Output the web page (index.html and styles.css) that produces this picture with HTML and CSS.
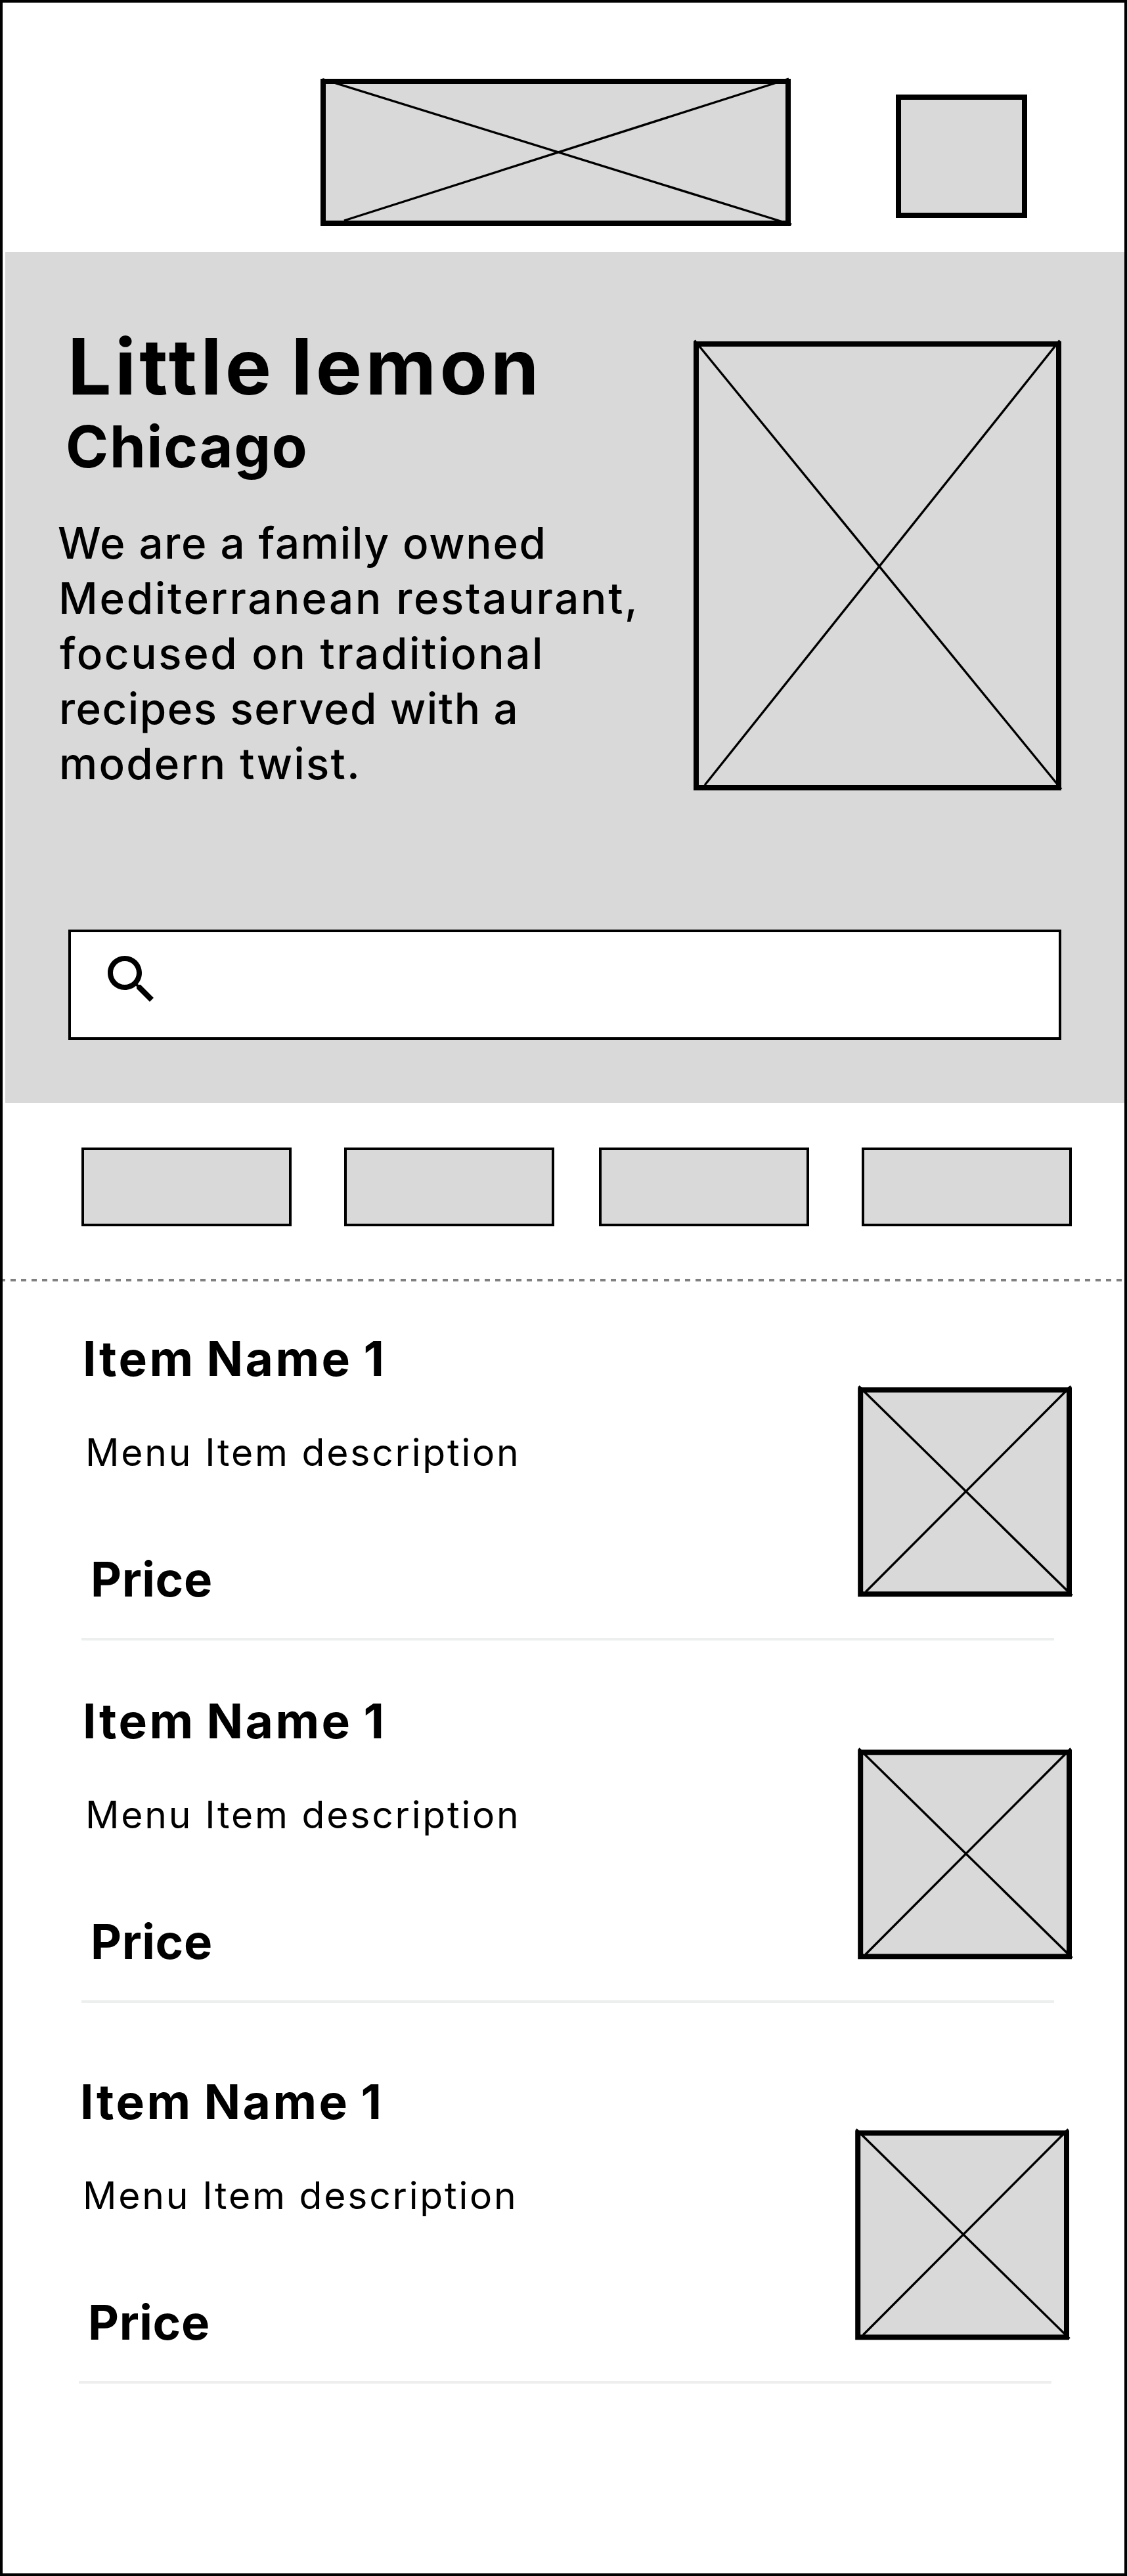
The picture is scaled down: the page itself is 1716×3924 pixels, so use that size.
FILE: index.html
```html
<!DOCTYPE html>
<html lang="en">
<head>
<meta charset="utf-8">
<title>Little lemon</title>
<link rel="stylesheet" href="styles.css">
</head>
<body>
<div class="screen">
  <header class="header">
    <svg class="logo" viewBox="0 0 716 224">
      <rect class="box" x="4" y="4" width="708" height="216"/>
      <path class="cross" d="M3 0.5L717 222M36 216L713 0"/>
    </svg>
    <div class="avatar"></div>
  </header>

  <section class="hero">
    <div class="hero-main">
      <div class="hero-text">
        <h1 class="title">Little lemon</h1>
        <h2 class="city">Chicago</h2>
        <p class="about">
          <span class="line line-1">We are a family owned</span>
          <span class="line line-2">Mediterranean restaurant,</span>
          <span class="line line-3">focused on traditional</span>
          <span class="line line-4">recipes served with a</span>
          <span class="line line-5">modern twist.</span>
        </p>
      </div>
      <svg class="hero-image" viewBox="0 0 560 684">
        <rect class="box" x="4" y="4" width="552" height="676"/>
        <path class="cross" d="M1.5 -1.5L560 682M17 676L557.5 -1.5"/>
      </svg>
    </div>
    <div class="search">
      <svg class="search-icon" viewBox="0 0 24 24"><path d="M15.5 14h-.79l-.28-.27C15.41 12.59 16 11.11 16 9.5 16 5.91 13.09 3 9.5 3S3 5.91 3 9.5 5.91 16 9.5 16c1.61 0 3.09-.59 4.23-1.57l.27.28v.79l5 4.99L20.49 19l-4.99-5zm-6 0C7.01 14 5 11.99 5 9.5S7.01 5 9.5 5 14 7.01 14 9.5 11.99 14 9.5 14z"/></svg>
    </div>
  </section>

  <nav class="filters">
    <div class="chip"></div>
    <div class="chip"></div>
    <div class="chip"></div>
    <div class="chip"></div>
  </nav>
  <div class="dashes"></div>

  <main class="menu">
    <article class="item">
      <div class="item-text">
        <h3 class="name">Item Name 1</h3>
        <p class="description">Menu Item description</p>
        <p class="price">Price</p>
      </div>
      <svg class="item-image" viewBox="0 0 326 320">
        <rect class="box" x="4.2" y="4.3" width="317.8" height="311"/>
        <path class="cross" d="M1.5 -1.5L326.5 317.5M12 312L324.5 -1.5"/>
      </svg>
    </article>
    <article class="item">
      <div class="item-text">
        <h3 class="name">Item Name 1</h3>
        <p class="description">Menu Item description</p>
        <p class="price">Price</p>
      </div>
      <svg class="item-image" viewBox="0 0 326 320">
        <rect class="box" x="4.2" y="4.3" width="317.8" height="311"/>
        <path class="cross" d="M1.5 -1.5L326.5 317.5M12 312L324.5 -1.5"/>
      </svg>
    </article>
    <article class="item item-last">
      <div class="item-text">
        <h3 class="name">Item Name 1</h3>
        <p class="description">Menu Item description</p>
        <p class="price">Price</p>
      </div>
      <svg class="item-image" viewBox="0 0 326 320">
        <rect class="box" x="4.2" y="4.3" width="317.8" height="311"/>
        <path class="cross" d="M1.5 -1.5L326.5 317.5M12 312L324.5 -1.5"/>
      </svg>
    </article>
  </main>
</div>
</body>
</html>
```
FILE: styles.css
```css
* { box-sizing: border-box; }

body {
  margin: 0;
  background: #fff;
  color: #000;
  font-family: Inter, "Liberation Sans", sans-serif;
}

h1, h2, h3, p { margin: 0; white-space: nowrap; }
svg { display: block; flex: none; overflow: visible; }

.screen {
  width: 1716px;
  height: 3924px;
  border: 4px solid #000;
  overflow: hidden;
}

/* Placeholder boxes */
.box { fill: #d9d9d9; stroke: #000; stroke-width: 8; }
.cross { fill: none; stroke: #000; stroke-width: 3.4; }

.header {
  display: flex;
  gap: 160px;
  height: 380px;
  padding: 116px 0 0 484px;
}
.logo { width: 716px; height: 224px; }
.avatar {
  width: 200px;
  height: 188px;
  margin-top: 24px;
  border: 8px solid #000;
  background: #d9d9d9;
}

.hero {
  height: 1296px;
  margin-left: 4px;
  padding: 116px 96px 0;
  background: #d9d9d9;
}
.hero-main {
  display: flex;
  justify-content: space-between;
  height: 916px;
}
.hero-image { width: 560px; height: 684px; margin-top: 20px; }
.title {
  margin: -2px 0 0 -1px;
  font-size: 118px;
  font-weight: 700;
  line-height: 120px;
  letter-spacing: 5.3px;
  word-spacing: -8px;
}
.city {
  margin: 10px 0 0 -4px;
  font-size: 88px;
  font-weight: 700;
  line-height: 104px;
  letter-spacing: 1.8px;
}
.about {
  margin: 54px 0 0 -16px;
  font-size: 65.5px;
  font-weight: 500;
  line-height: 84px;
}
.line { display: block; }
.line-1 { letter-spacing: 1.7px; }
.line-2 { padding-left: 1px; letter-spacing: 2.7px; }
.line-3 { padding-left: 3px; letter-spacing: 2.6px; }
.line-4 { padding-left: 2px; letter-spacing: 1.5px; }
.line-5 { padding-left: 2px; letter-spacing: 2.2px; }

.search {
  height: 168px;
  padding: 24px 44px;
  border: 4px solid #000;
  background: #fff;
}
.search-icon { width: 96px; height: 96px; }

.filters {
  display: flex;
  gap: 80px;
  height: 268px;
  padding: 68px 0 0 120px;
}
.chip {
  width: 320px;
  height: 120px;
  border: 4px solid #000;
  background: #d9d9d9;
}
.chip:nth-child(3) { margin-left: -12px; }

.dashes {
  height: 4px;
  background: repeating-linear-gradient(90deg, #808080 0 8px, #fff 8px 16.04px) -4px 0 / 1716px 4px no-repeat;
}

.menu { padding: 79px 80px 0 120px; }
.item {
  display: flex;
  justify-content: space-between;
  height: 552px;
  background: linear-gradient(#edefee, #edefee) 0 464px / 1481px 4px no-repeat;
}
.item:nth-child(2) { height: 580px; }
.item-last { margin: 0 4px 0 -4px; }
.item-image { width: 326px; height: 320px; margin-top: 82px; }
.name {
  margin-top: -1px;
  padding-left: 2px;
  font-size: 73px;
  font-weight: 700;
  line-height: 80px;
  letter-spacing: 3.5px;
  word-spacing: -4px;
}
.description {
  margin-top: 71px;
  padding-left: 6px;
  font-size: 57px;
  line-height: 64px;
  letter-spacing: 2.8px;
}
.price {
  margin-top: 121px;
  padding-left: 14px;
  font-size: 72.6px;
  font-weight: 700;
  line-height: 80px;
  letter-spacing: 0.6px;
}
```
